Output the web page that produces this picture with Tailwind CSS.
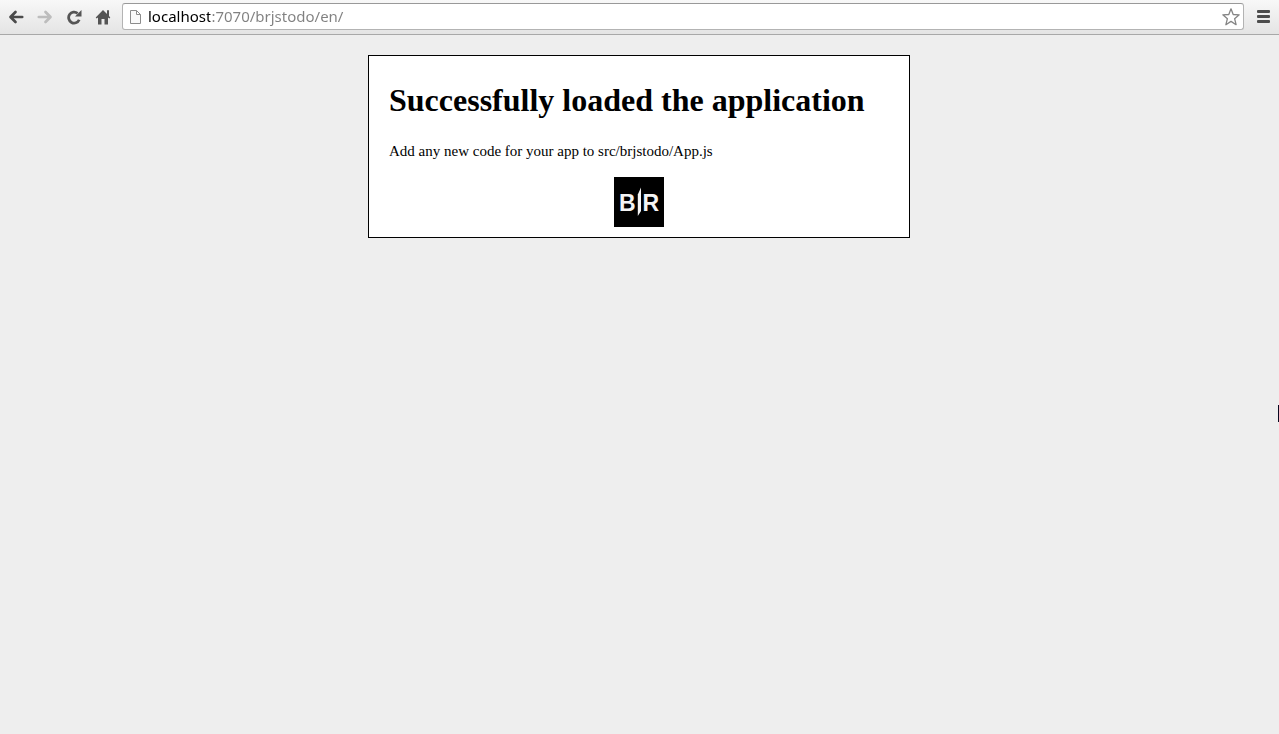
<!DOCTYPE html>
<html lang="en">
<head>
<meta charset="utf-8">
<title>brjstodo</title>
<script src="https://cdn.jsdelivr.net/npm/@tailwindcss/browser@4"></script>
</head>
<body class="min-h-screen bg-[#eee] text-black overflow-x-hidden">
<header class="flex h-[35px] items-center border-b border-[#a8a8a8] bg-linear-to-b from-[#f8f8f8] to-[#e4e4e4] pb-px pl-px">
  <nav class="flex" aria-label="Browser controls">
    <button type="button" aria-label="Back" class="flex h-[27px] w-[29px] items-center justify-center">
      <svg class="size-4" viewBox="0 0 16 16" fill="none" stroke="#4b4b4b" stroke-width="2.700" stroke-linecap="round" stroke-linejoin="round"><path d="M7.500 3 2.500 8l5 5M2.800 8H14.200"/></svg>
    </button>
    <button type="button" aria-label="Forward" class="flex h-[27px] w-[29px] items-center justify-center">
      <svg class="size-4" viewBox="0 0 16 16" fill="none" stroke="#bdbdbd" stroke-width="2.700" stroke-linecap="round" stroke-linejoin="round"><path d="M8.500 3 13.500 8l-5 5M13.200 8H1.800"/></svg>
    </button>
    <button type="button" aria-label="Reload" class="flex h-[27px] w-[29px] items-center justify-center">
      <svg class="size-4" viewBox="0 0 16 16"><path d="M11.600 4.300A5.500 5.500 0 1 0 13.200 10.800" fill="none" stroke="#555" stroke-width="2.800"/><path d="M15.500 1v6.500H9z" fill="#555"/></svg>
    </button>
    <button type="button" aria-label="Home" class="flex h-[27px] w-[29px] items-center justify-center">
      <svg class="size-4" viewBox="0 0 16 16" fill="#555"><path d="M8 1 .7 8.500l1 1L3 8.600V15.500h3.500V10h3v5.500H13V8.600l1.300.9 1-1L14 7V1.200h-2V5z"/></svg>
    </button>
  </nav>
  <form class="ml-[5px] flex h-[27px] min-w-0 flex-1 items-center rounded-[3px] border border-[#b3b3b3] border-t-[#999] bg-white pr-[3px] pl-[6px]">
    <svg class="mr-[6px] h-4 w-[13px] shrink-0" viewBox="0 0 13 16" fill="#fafafa" stroke="#8c8c8c" stroke-linejoin="round"><path d="M1.500 1.500h6l4 4v9h-10zM7.500 1.500v4h4"/></svg>
    <input aria-label="Address" type="text" value="localhost:7070/brjstodo/en/" class="h-6 min-w-0 flex-1 bg-[linear-gradient(90deg,#000_62px,#808080_62px)] bg-clip-text pb-px font-['Noto_Sans',sans-serif] text-[15px] text-transparent outline-none">
    <button type="button" aria-label="Bookmark this page" class="flex shrink-0">
      <svg class="size-[18px]" viewBox="0 0 18 18" fill="#fff" stroke="#858585" stroke-width="1.300" stroke-linejoin="round"><path d="m9 .8 2.200 5.700 6 .3-4.600 3.900 1.500 6L9 13.400l-5.100 3.300 1.500-6L.8 6.800l6-.3z"/></svg>
    </button>
  </form>
  <button type="button" aria-label="Menu" class="mr-2 ml-3 flex">
    <svg class="h-[13px] w-[15px]" viewBox="0 0 15 13" fill="#4d4d4d"><rect x="1" width="13" height="3" rx="1"/><rect x="1" y="5" width="13" height="3" rx="1"/><rect x="1" y="10" width="13" height="3" rx="1"/></svg>
  </button>
</header>
<main class="pt-5 pr-[21px] pl-5 font-['Liberation_Serif',serif]">
  <section class="mx-auto max-w-[542px] border border-black bg-white px-5 pt-[25px] pb-[10px]">
    <h1 class="text-[32px] leading-[38px] font-bold">Successfully loaded the application</h1>
    <p class="mt-[22px] text-[15px] leading-5">Add any new code for your app to src/brjstodo/App.js</p>
    <svg class="mx-auto mt-4 size-[50px]" viewBox="0 0 50 50" role="img" aria-label="BladeRunner">
      <rect width="50" height="50"/>
      <g fill="#f4f4f4" font-family="Liberation Sans, sans-serif" font-weight="700" font-size="23"><text x="5" y="33.500">B</text><text x="28.500" y="33.500">R</text></g>
      <path d="M27 10.500V34l-3.200 5V17.500z" fill="#f4f4f4"/>
    </svg>
  </section>
</main>
<div class="absolute top-[405px] right-0 h-[17px] w-px bg-[#080820]" aria-hidden="true"></div>
</body>
</html>
